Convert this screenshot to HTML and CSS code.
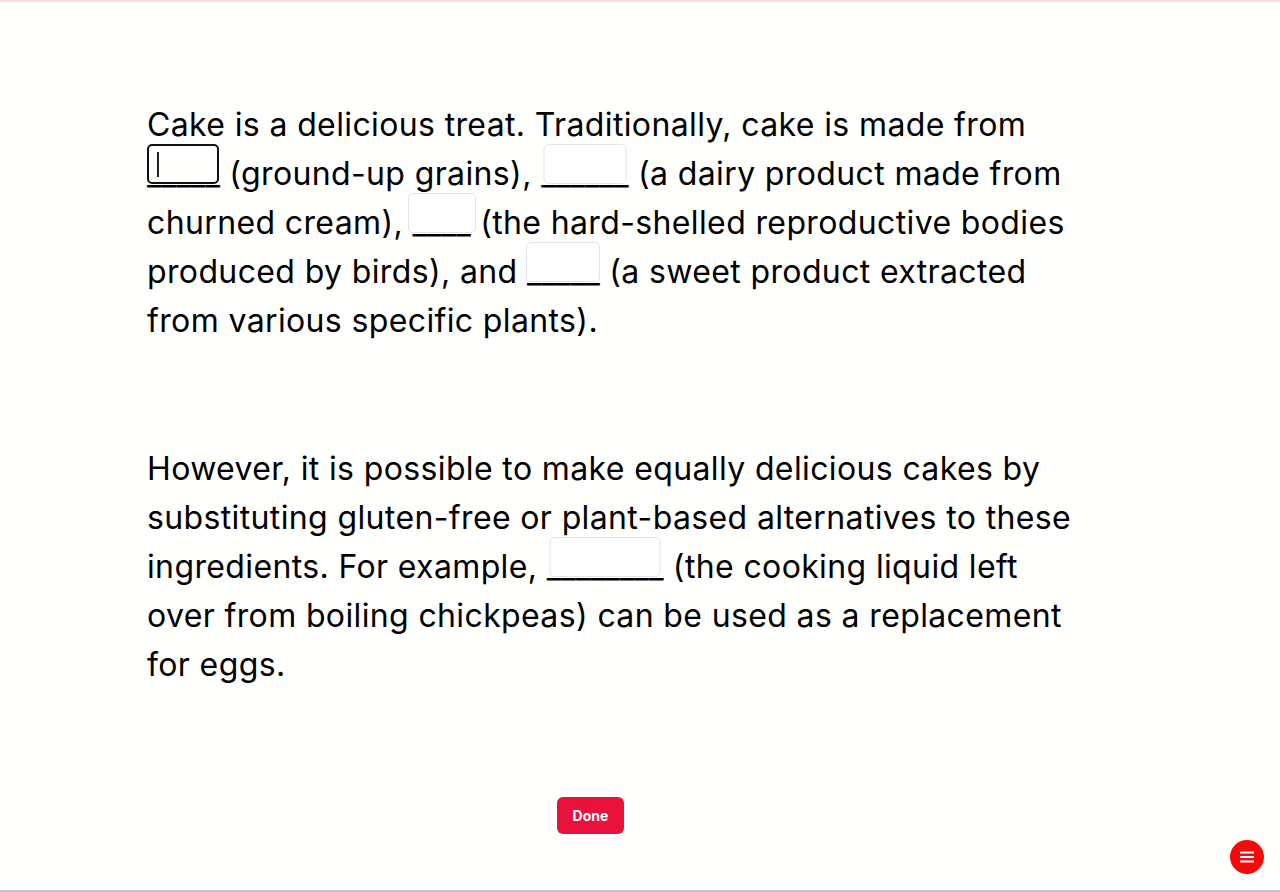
FILE: index.html
```html
<!DOCTYPE html>
<html lang="en">
<head>
<meta charset="utf-8">
<title>Cloze</title>
<link rel="stylesheet" href="styles.css">
</head>
<body>
<div class="page">
  <main class="content">
    <p class="passage">Cake is a delicious treat. Traditionally, cake is made from <span class="blank">_____<span class="box box-focus w1"><span class="caret"></span></span></span> (ground-up grains), <span class="blank">______<span class="box w2"></span></span> (a dairy product made from churned cream), <span class="blank">____<span class="box w3"></span></span> (the hard-shelled reproductive bodies produced by birds), and <span class="blank">_____<span class="box w4"></span></span> (a sweet product extracted from various specific plants).</p>
    <p class="passage">However, it is possible to make equally delicious cakes by substituting gluten-free or plant-based alternatives to these ingredients. For example, <span class="blank">________<span class="box w5"></span></span> (the cooking liquid left over from boiling chickpeas) can be used as a replacement for eggs.</p>
    <div class="actions">
      <button class="done" type="button">Done</button>
    </div>
  </main>
  <button class="menu" type="button" aria-label="Menu">
    <svg width="14" height="12" viewBox="0 0 14 12"><rect x="0" y="0.5" width="14" height="2" fill="#fff"/><rect x="0" y="5" width="14" height="2" fill="#fff"/><rect x="0" y="9.5" width="14" height="2" fill="#fff"/></svg>
  </button>
</div>
</body>
</html>
```
FILE: styles.css
```css
html, body {
  margin: 0;
  padding: 0;
  background: #fffffd;
}
body {
  font-family: Inter, "Noto Sans", sans-serif;
  color: #000;
}
.page {
  box-sizing: border-box;
  border-top: 2px solid #f2dde2;
  border-bottom: 2px solid #bcc5d6;
  height: 892px;
  overflow: hidden;
}
.content {
  padding: 98px 0 0 147px;
}
.passage {
  width: 940px;
  margin: 0 0 99px 0;
  font-size: 32px;
  line-height: 49px;
  letter-spacing: 0.37px;
}
.passage + .passage {
  margin-bottom: 0;
}
.blank {
  position: relative;
  letter-spacing: 0;
}
.box {
  position: absolute;
  left: 50%;
  bottom: 9px;
  height: 40px;
  transform: translateX(-50%);
  box-sizing: border-box;
  border: 1px solid #e3e4ea;
  border-radius: 5px;
  background: rgba(255,255,255,0.9);
}
.box-focus {
  border: 2px solid #111;
  border-radius: 5px;
  background: transparent;
}
.caret {
  position: absolute;
  left: 8px;
  top: 6px;
  width: 1.5px;
  height: 25px;
  background: #222;
}
.w1 { width: 72px; }
.w2 { width: 83px; }
.w3 { width: 68px; }
.w4 { width: 74px; }
.w5 { width: 111px; }
.actions {
  width: 887px;
  display: flex;
  justify-content: center;
  padding-top: 108px;
}
.done {
  font-family: Inter, "Noto Sans", sans-serif;
  font-size: 14px;
  font-weight: 700;
  color: #fff;
  background: #e8123c;
  border: none;
  border-radius: 6px;
  width: 67px;
  height: 37px;
  padding: 0;
  cursor: pointer;
}
.menu {
  position: fixed;
  right: 16px;
  bottom: 18px;
  width: 34px;
  height: 34px;
  border-radius: 50%;
  border: none;
  background: #f50a0a;
  display: flex;
  align-items: center;
  justify-content: center;
  padding: 0;
}
```
